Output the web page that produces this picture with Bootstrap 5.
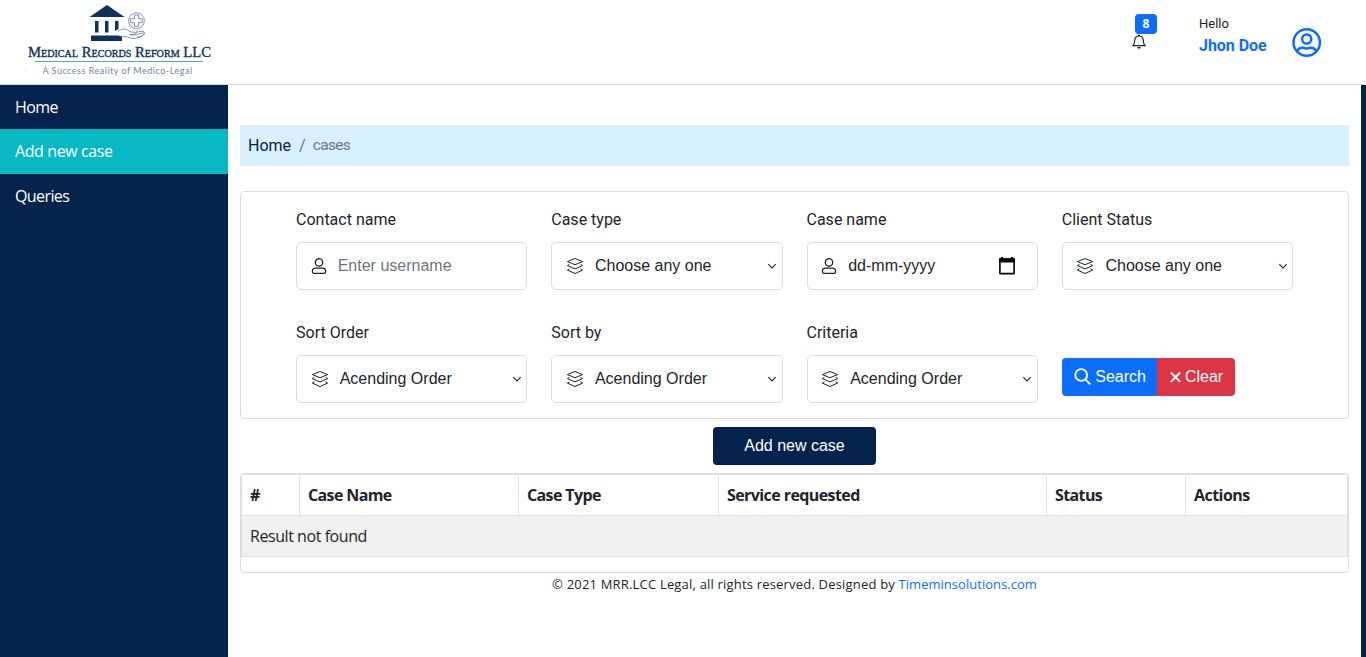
<!DOCTYPE html>
<html lang="en">
<head>
<meta charset="utf-8">
<meta name="viewport" content="width=device-width, initial-scale=1">
<title>Cases</title>
<link href="https://cdn.jsdelivr.net/npm/bootstrap@5.3.0/dist/css/bootstrap.min.css" rel="stylesheet">
<style>
:root{--navy:#03224c;--teal:#08b8c4;--line:#dcdcde}
body{font-family:"Open Sans","Noto Sans",sans-serif;height:100vh;overflow:hidden;color:#212529}
svg{flex-shrink:0}
.topbar{height:85px;border-bottom:1px solid #d9d9d9}
.brand-logo{width:228px;height:84px}
.brand-name{font-family:"Liberation Serif",serif;font-variant-caps:small-caps;font-size:14.5px;fill:#12305c;stroke:#12305c;stroke-width:.35px}
.userbox{font-family:Roboto,sans-serif;width:93px;margin-left:40px;padding-bottom:12px}
.hello{font-size:13px;line-height:20px}
.uname{font-size:16px;line-height:24px;font-weight:700;letter-spacing:-.03px}
.bell{width:24px;height:84px}
.bell svg{position:absolute;left:-3px;top:34px}
.bell .badge{position:absolute;left:0;top:14px;width:22px;height:20px;padding:0;line-height:20px;font-size:12px;border-radius:4px;font-family:"Open Sans",sans-serif}
.avatar{margin-right:44px}
.side{width:228px;background:var(--navy)}
.side .nav-link{color:#fff;height:44.5px;padding:0 15px;line-height:45px;font-size:16px;letter-spacing:-.6px}
.side .nav-link:first-child{height:44px;letter-spacing:-.6px}
.side .nav-link.active{background:var(--teal);height:45px;letter-spacing:-.4px}
.rail{width:5px;background:var(--navy)}
.content{padding:40px 12px 0}
.crumbs{height:41px;background:#d8f0ff;font-family:Roboto,sans-serif;padding:0 8px;line-height:41px}
.crumbs a{color:var(--navy)}
.crumbs .here{font-size:15.5px;letter-spacing:-.65px;margin-left:-1px}
.panel{border-color:var(--line);border-radius:4px}
.filters{height:228px;margin-top:25px;padding:16px 55px 0}
.filters label{font-family:Roboto,sans-serif;line-height:24px;margin-bottom:10px;display:block}
.filters .row>div{height:113px}
.field{height:48px;border:1px solid var(--line);border-radius:5px;padding:0 14.5px 0 13.7px;font-family:"Liberation Sans",Arial,sans-serif}
.field input,.field select{border:0;outline:0;background:none;padding:0;margin-left:11px;min-width:0;color:#212529;line-height:24px;height:24px;appearance:none}
.field input::placeholder{color:#6c757d}
.field.pick{padding-right:4.500px}
.cal{margin-right:5px}
.acts .btn,.addbtn{font-family:"Liberation Sans",Arial,sans-serif;height:38px;line-height:24px;border-radius:4px}
.acts{padding-top:37px}
.acts .btn{padding:5px 12px 6px 12.500px;border:0}
.acts .btn-danger{padding-left:13px}
.addbtn{width:163px;background:var(--navy);color:#fff;margin:8px auto;border:0}
.results{height:100px;overflow:hidden}
.results table{table-layout:fixed;border-color:#dee2e6;margin:0;line-height:24px}
.results th{letter-spacing:-.62px}
.results th:nth-child(4){letter-spacing:-.58px}
.results th:last-child{letter-spacing:-.54px}
.results td{letter-spacing:-.44px;background:#f1f1f1}
.foot{font-size:13px;line-height:20px;padding-top:1px;letter-spacing:.19px}
.foot a{letter-spacing:.03px}
</style>
</head>
<body class="d-flex flex-column">
<svg class="d-none">
  <symbol id="person" viewBox="0 0 16 18"><path d="M8 1.700a3.700 3.700 0 1 1 0 7.400 3.700 3.700 0 0 1 0-7.400zM4.400 11.200h7.200c2 0 3 1.400 3 3.300 0 1.200-.7 1.900-1.600 1.900H3c-.9 0-1.600-.7-1.600-1.900 0-1.900 1-3.300 3-3.300z" fill="none" stroke="currentColor" stroke-width="1.300"/></symbol>
  <symbol id="layers" viewBox="0 0 18 18"><path d="M9 1.500 16.600 4.600 9 7.700 1.400 4.600zM3.500 7.300 1.400 8.600 9 11.900l7.600-3.300-2.100-1.300M3.500 11.800l-2.100 1.300L9 16.500l7.600-3.400-2.100-1.300" fill="none" stroke="currentColor" stroke-width="1" stroke-linejoin="round"/></symbol>
  <symbol id="chev" viewBox="0 0 10 10"><path d="M1.300 3.200 5 6.900l3.700-3.700" fill="none" stroke="currentColor" stroke-width="1.050"/></symbol>
</svg>
<header class="topbar d-flex align-items-center flex-shrink-0">
  <svg class="brand-logo me-auto" viewBox="0 0 228 84">
    <g fill="#12305c"><path d="M107 5 124.500 17h-35z"/><path d="M95 21h3.500v11.500H95zM105 21h3.500v11.500H105zM115 21h3.500v8l-3.500 2z"/><path d="M91 35.500h27l4 1v4.500H91z"/></g>
    <g fill="none" stroke="#62779a" stroke-width=".8"><circle cx="136.500" cy="20.700" r="7.900"/><path d="M134.500 15h4v3.700h3.800v4h-3.800v3.700h-4v-3.700h-3.800v-4h3.800z"/><path d="M118 31.500c5-4 8-3 12 .2 3 1 7 0 6.500 1.300s-5 1.700-7 1.300c4 2.500 10-1.500 15.500-1.500-2 4-6 5.200-10 5.600-6 .5-9-3.400-14-1.700"/><path d="M136 32c4-.3 5.500-1 8-.6M137 37c4-.3 6-1.600 7-3"/></g>
    <text class="brand-name" x="28" y="57" textLength="183" lengthAdjust="spacingAndGlyphs">Medical Records Reform LLC</text>
    <path d="M35 61.500h168" stroke="#55a9c7" stroke-width="1"/>
    <text x="42.500" y="73.500" textLength="149.500" font-family="Lato,sans-serif" font-size="9" fill="#72859f">A Success Reality of Medico-Legal</text>
    <circle cx="25.500" cy="70.500" r=".5" fill="#bbc5d0"/>
  </svg>
  <div class="bell position-relative"><span class="badge text-bg-primary">8</span>
    <svg width="14" height="15" viewBox="0 0 14 15"><path d="M1 11.700c1.500-1.500 1.500-3 1.700-5.300C2.900 3.700 4.500 2 7 2s4.100 1.700 4.300 4.400c.2 2.300.2 3.800 1.700 5.300z" fill="none" stroke="#212529" stroke-width="1.200"/><path d="M6 .5h2v1.700H6zM5.200 13h3.600a1.800 1.800 0 0 1-3.600 0z" fill="#212529"/></svg></div>
  <div class="userbox"><div class="hello">Hello</div><div class="uname text-primary">Jhon Doe</div></div>
  <svg class="avatar text-primary" width="30" height="30" viewBox="0 0 30 30"><g fill="none" stroke="currentColor" stroke-width="2.500"><circle cx="14.700" cy="15.500" r="13.200"/><circle cx="14.700" cy="12" r="4.600"/><path d="M4.700 24.300C6.700 20.900 8.700 20.500 10.900 20.700c2.500 1 5.100 1 7.600 0 2.200-.2 4.200.2 6.200 3.600"/></g></svg>
</header>
<div class="d-flex flex-grow-1">
  <nav class="side nav flex-column flex-shrink-0 flex-nowrap">
    <a class="nav-link" href="#">Home</a><a class="nav-link active" href="#">Add new case</a><a class="nav-link" href="#">Queries</a>
  </nav>
  <main class="content flex-grow-1">
    <nav class="crumbs d-flex"><a class="text-decoration-none" href="#">Home</a><span class="text-secondary px-2">/</span><span class="text-secondary here">cases</span></nav>
    <section class="card panel filters d-block">
      <div class="row">
        <div class="col-3"><label>Contact name</label><div class="field d-flex align-items-center"><svg width="16" height="18"><use href="#person"/></svg><input class="flex-grow-1" placeholder="Enter username"></div></div>
        <div class="col-3"><label>Case type</label><div class="field pick d-flex align-items-center"><svg width="18" height="18"><use href="#layers"/></svg><select class="flex-grow-1"><option>Choose any one</option></select><svg width="10" height="10"><use href="#chev"/></svg></div></div>
        <div class="col-3"><label>Case name</label><div class="field d-flex align-items-center"><svg width="16" height="18"><use href="#person"/></svg><input class="flex-grow-1" value="dd-mm-yyyy"><svg class="cal" width="20" height="20" viewBox="0 0 20 20"><path d="M5 1v2M15 1v2" stroke="#000" stroke-width="2"/><path d="M2.900 3h14.200v14.600H2.900z" fill="none" stroke="#000" stroke-width="1.600" stroke-linejoin="round"/><path d="M2 2.500h16v4H2z"/></svg></div></div>
        <div class="col-3"><label>Client Status</label><div class="field pick d-flex align-items-center"><svg width="18" height="18"><use href="#layers"/></svg><select class="flex-grow-1"><option>Choose any one</option></select><svg width="10" height="10"><use href="#chev"/></svg></div></div>
        <div class="col-3"><label>Sort Order</label><div class="field pick d-flex align-items-center"><svg width="18" height="18"><use href="#layers"/></svg><select class="flex-grow-1"><option>Acending Order</option></select><svg width="10" height="10"><use href="#chev"/></svg></div></div>
        <div class="col-3"><label>Sort by</label><div class="field pick d-flex align-items-center"><svg width="18" height="18"><use href="#layers"/></svg><select class="flex-grow-1"><option>Acending Order</option></select><svg width="10" height="10"><use href="#chev"/></svg></div></div>
        <div class="col-3"><label>Criteria</label><div class="field pick d-flex align-items-center"><svg width="18" height="18"><use href="#layers"/></svg><select class="flex-grow-1"><option>Acending Order</option></select><svg width="10" height="10"><use href="#chev"/></svg></div></div>
        <div class="col-3 acts"><div class="btn-group"><button class="btn btn-primary d-flex align-items-center"><svg class="me-1" width="17" height="17" viewBox="0 0 17 17"><g fill="none" stroke="#fff" stroke-width="1.900"><circle cx="7.200" cy="7" r="5.900"/><path d="m11.300 11.300 5 5"/></g></svg>Search</button><button class="btn btn-danger d-flex align-items-center"><svg class="me-1" width="11" height="12" viewBox="0 0 11 12"><path d="m.8 1.500 9.400 9.400m0-9.400L.8 10.900" stroke="#fff" stroke-width="2"/></svg>Clear</button></div></div>
      </div>
    </section>
    <button class="btn addbtn d-block">Add new case</button>
    <section class="card panel results">
      <table class="table table-bordered">
        <colgroup><col style="width:58px"><col style="width:219px"><col style="width:200px"><col style="width:328px"><col style="width:139px"><col></colgroup>
        <thead><tr><th>#</th><th>Case Name</th><th>Case Type</th><th>Service requested</th><th>Status</th><th>Actions</th></tr></thead>
        <tbody><tr><td colspan="6">Result not found</td></tr></tbody>
      </table>
    </section>
    <footer class="foot text-center">© 2021 MRR.LCC Legal, all rights reserved. Designed by <a class="text-decoration-none" href="#">Timeminsolutions.com</a></footer>
  </main>
  <div class="ms-auto rail flex-shrink-0"></div>
</div>
<script src="https://cdn.jsdelivr.net/npm/bootstrap@5.3.0/dist/js/bootstrap.bundle.min.js"></script>
</body>
</html>
